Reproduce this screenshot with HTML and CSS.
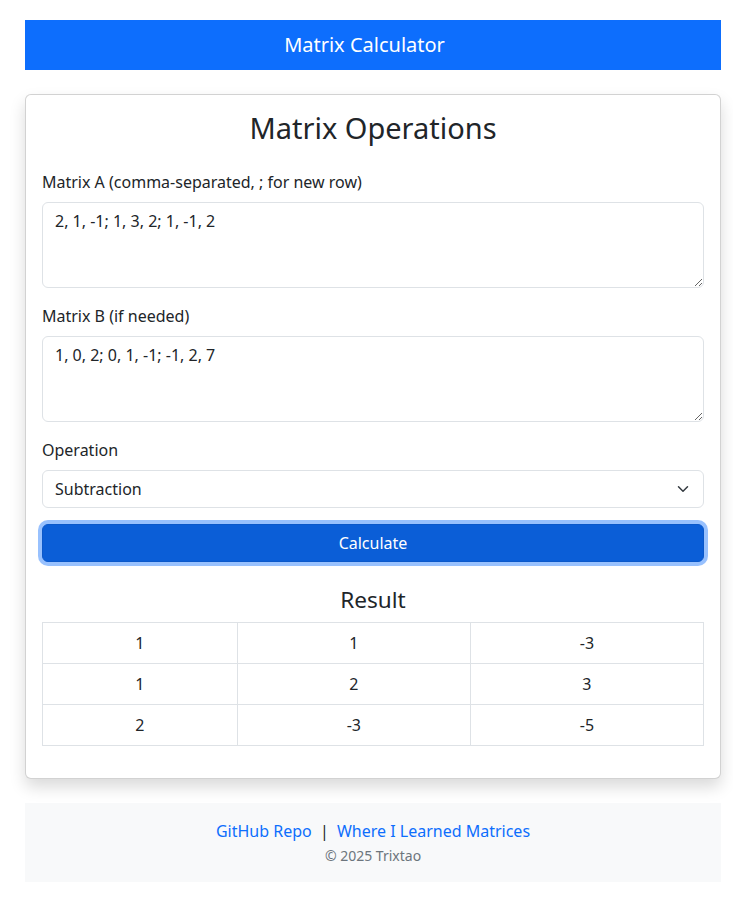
FILE: index.html
```html
<!DOCTYPE html>
<html lang="en">
<head>
<meta charset="utf-8">
<title>Matrix Calculator</title>
<link rel="stylesheet" href="styles.css">
</head>
<body>
<div class="page">
  <header class="topbar">Matrix Calculator</header>
  <main class="card">
    <h2 class="title">Matrix Operations</h2>
    <div class="field">
      <label class="label" for="ma">Matrix A (comma-separated, ; for new row)</label>
      <textarea id="ma" class="control" rows="3">2, 1, -1; 1, 3, 2; 1, -1, 2</textarea>
    </div>
    <div class="field">
      <label class="label" for="mb">Matrix B (if needed)</label>
      <textarea id="mb" class="control" rows="3">1, 0, 2; 0, 1, -1; -1, 2, 7</textarea>
    </div>
    <div class="field">
      <label class="label" for="op">Operation</label>
      <div class="select-wrap">
        <select id="op" class="control select">
          <option>Addition</option>
          <option selected>Subtraction</option>
          <option>Multiplication</option>
        </select>
        <svg class="chevron" width="16" height="12" viewBox="0 0 16 16" aria-hidden="true"><path fill="none" stroke="#343a40" stroke-linecap="round" stroke-linejoin="round" stroke-width="2" d="m2 5 6 6 6-6"/></svg>
      </div>
    </div>
    <button class="btn" type="button">Calculate</button>
    <h4 class="result-title">Result</h4>
    <table class="result">
      <tbody>
        <tr><td>1</td><td>1</td><td>-3</td></tr>
        <tr><td>1</td><td>2</td><td>3</td></tr>
        <tr><td>2</td><td>-3</td><td>-5</td></tr>
      </tbody>
    </table>
  </main>
  <footer class="footer">
    <p class="links"><a href="#">GitHub Repo</a> <span class="sep">|</span> <a href="#">Where I Learned Matrices</a></p>
    <p class="copy">© 2025 Trixtao</p>
  </footer>
</div>
</body>
</html>
```
FILE: styles.css
```css
* { box-sizing: border-box; }
html, body { margin: 0; padding: 0; background: #fff; }
body {
  font-family: "Noto Sans", "Open Sans", sans-serif;
  font-size: 16px;
  line-height: 1.5;
  color: #212529;
}
.page {
  padding: 20px 12px 20px 25px;
}
.topbar {
  background: #0d6efd;
  color: #fff;
  height: 50px;
  display: flex;
  align-items: center;
  justify-content: center;
  font-size: 20px;
  padding-right: 17px;
}
.card {
  display: block;
  margin-top: 24px;
  border: 1px solid rgba(0,0,0,.175);
  border-radius: 6px;
  box-shadow: 0 8px 16px rgba(0,0,0,.15);
  padding: 16px;
  background: #fff;
}
.title {
  margin: 0 0 24px;
  font-size: 29px;
  font-weight: 400;
  line-height: 1.2;
  text-align: center;
}
.field { margin-bottom: 16px; }
.label {
  display: block;
  margin-bottom: 8px;
}
.control {
  display: block;
  width: 100%;
  font-family: inherit;
  font-size: 16px;
  line-height: 1.5;
  color: #212529;
  background: #fff;
  border: 1px solid #dee2e6;
  border-radius: 6px;
  padding: 6px 12px;
  margin: 0;
}
textarea.control { resize: vertical; height: 86px; }
.select-wrap { position: relative; }
.select {
  appearance: none;
  -webkit-appearance: none;
  padding-right: 36px;
  height: 38px;
}
.chevron {
  position: absolute;
  right: 13px;
  top: 13px;
  pointer-events: none;
}
.btn {
  display: block;
  width: 100%;
  height: 38px;
  font-family: inherit;
  font-size: 16px;
  line-height: 1.5;
  color: #fff;
  background: #0b5ed7;
  border: 1px solid #0a58ca;
  border-radius: 6px;
  box-shadow: 0 0 0 4px rgba(49,132,253,.5);
  padding: 6px 12px;
}
.result-title {
  margin: 24px 0 9px;
  font-size: 22.6px;
  font-weight: 400;
  line-height: 1.2;
  text-align: center;
}
.result {
  width: 100%;
  border-collapse: collapse;
  margin-bottom: 16px;
}
.result td {
  border: 1px solid #dee2e6;
  padding: 8px;
  text-align: center;
}
.footer {
  margin-top: 24px;
  background: #f8f9fa;
  padding: 16px;
  text-align: center;
}
.links { margin: 0 0 2px; }
.links a { color: #0d6efd; text-decoration: none; }
.sep { margin: 0 4px; }
.copy {
  margin: 0;
  font-size: 14px;
  color: #6c757d;
}
```
